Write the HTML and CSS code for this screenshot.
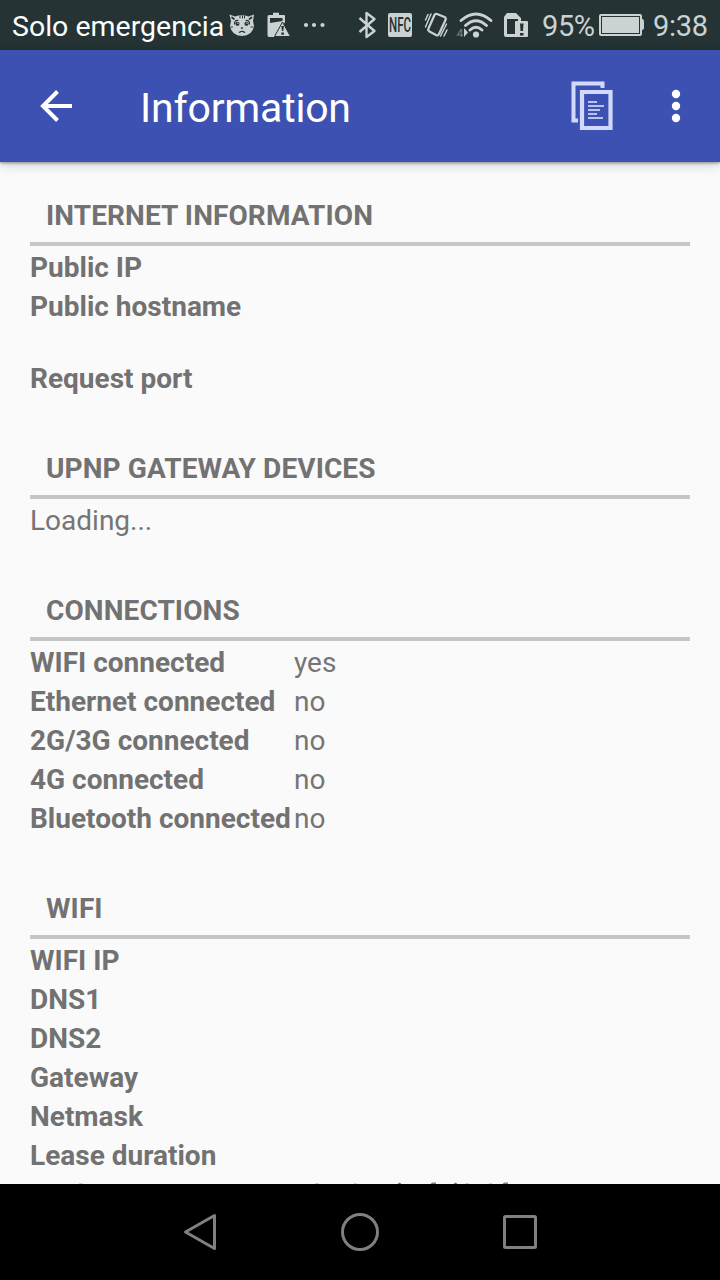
FILE: index.html
```html
<!DOCTYPE html>
<html lang="en">
<head>
<meta charset="utf-8">
<title>Information</title>
<link rel="stylesheet" href="styles.css">
</head>
<body>
<div class="screen">
  <div class="status">
    <span class="carrier">Solo emergencia</span>
    <svg class="status-icons" width="304" height="50" viewBox="226 0 304 50">
      <g fill="#cbd2d2">
        <path d="M229.500 14.500L235 16.500Q242 14 248.500 16.500L254 14.500L253 21L254 26Q252.500 35.500 242 36Q231.500 35.500 230 26L231 21Z"/>
        <path d="M271 15H273V12.800H279V15H284Q285 15 285 16V22L276 37H269Q267.500 37 267.500 35V17Q267.500 15 269 15Z"/>
        <circle cx="306" cy="25" r="2.100"/><circle cx="314" cy="25" r="2.100"/><circle cx="322.500" cy="25" r="2.100"/>
        <rect x="388" y="13" width="24" height="24" rx="2"/>
        <circle cx="476" cy="34.500" r="3.100"/>
        <path d="M464 28L468 32.500L464 37Z"/>
        <path d="M507 13H516L521 18V21H518V19H507V34H516V37H506Q504 37 504 35V17Z"/>
        <rect x="515" y="21" width="13" height="16" rx="1"/>
      </g>
      <g fill="none" stroke="#253335" stroke-linecap="round">
        <path d="M232 17.500L234 19M251.500 17.500L249.500 19" stroke-width="1.700"/>
        <path d="M240 16V18M242.500 16V18M244.500 16V18M231 27H232.500M252.500 27H251" stroke-width="1"/>
        <path d="M234.500 24Q234.500 20 238 20.500M249.500 24Q249.500 20 246 20.500" stroke-width="1.200"/>
        <path d="M239.500 32.300Q242 30.500 244.500 32.300M241.500 28H242.500" stroke-width="1.400"/>
      </g>
      <circle cx="237.500" cy="23.800" r="2.100" fill="#253335"/><circle cx="246.500" cy="23.800" r="2.100" fill="#253335"/>
      <circle cx="238" cy="23.200" r=".7" fill="#cbd2d2"/><circle cx="247" cy="23.200" r=".7" fill="#cbd2d2"/>
      <path d="M270 18H282.500V21L270 23Z" fill="#253335"/>
      <path d="M282.500 22L290.500 36.500H274.500Z" fill="#cbd2d2" stroke="#253335" stroke-width="1"/>
      <path d="M281.300 26H283.900L283.300 31H282ZM281.300 32.500H283.900V34.700H281.300Z" fill="#253335"/>
      <path d="M359.500 18L374.500 31L366.500 37V13L374.500 19L359.500 32" fill="none" stroke="#cbd2d2" stroke-width="2.400" stroke-linejoin="round"/>
      <text x="389" y="32" class="nfc" textLength="22" lengthAdjust="spacingAndGlyphs">NFC</text>
      <g fill="none" stroke="#cbd2d2" stroke-linecap="round">
        <path d="M437 14L444.500 17Q446.500 18 445.500 20L439 34Q438 36 436 35L429.500 31.500Q427.500 30.500 428.500 28.500L434.500 15Q435.300 13.300 437 14Z" stroke-width="2.200"/>
        <path d="M425.500 20L428 14.500M425.500 27L431 14M440.500 36L446.500 24M444 36L447 30" stroke-width="1.500"/>
        <path d="M461 20.500Q476 7.500 491 20.500M465.500 25.500Q476 16 486.500 25.500M470 30Q476 24.500 482 30" stroke-width="2.900"/>
      </g>
      <path d="M461.500 29L457.500 35H463M461.500 29V37" fill="none" stroke="#66716f" stroke-width="1.400"/>
      <path d="M520 23.500H523.500L523 31H520.500ZM520 33H523.500V35.500H520Z" fill="#253335"/>
    </svg>
    <span class="percent">95%</span>
    <svg class="battery" width="48" height="50" viewBox="597 0 48 50">
      <path d="M599 16Q599 14 601 14H640Q642 14 642 16V19H643Q644 20 644 22V28Q644 30 642 30V34Q642 36 640 36H601Q599 36 599 34Z" fill="#cbd2d2"/>
      <rect x="601.500" y="16.500" width="38" height="17" fill="none" stroke="#253335"/>
    </svg>
    <span class="clock">9:38</span>
  </div>

  <header class="toolbar">
    <svg class="back" width="40" height="40" viewBox="36 86 40 40"><path d="M57.500 91.500L43 106L57.500 120.500M42 106H72" fill="none" stroke="#fff" stroke-width="4"/></svg>
    <h1 class="title">Information</h1>
    <svg class="copy" width="46" height="52" viewBox="569 80 46 52">
      <path d="M602.500 88V83.500H573.500V120.500H578" fill="none" stroke="#d3d9fb" stroke-width="4"/>
      <path d="M582 92H610.500V128H582Z" fill="none" stroke="#d3d9fb" stroke-width="4.200"/>
      <path d="M588 102H597M588 106H604M588 110H600M588 114H597M588 118H603" stroke="#b9c3f2" stroke-width="1.800"/>
    </svg>
    <svg class="more" width="10" height="36" viewBox="671 88 10 36" fill="#fff"><circle cx="676" cy="94" r="4.200"/><circle cx="676" cy="106" r="4.200"/><circle cx="676" cy="118" r="4.200"/></svg>
  </header>

  <main class="content">
    <section class="group">
      <h2 class="heading">INTERNET INFORMATION</h2>
      <div class="row"><b>Public IP</b></div>
      <div class="row row-tall"><b>Public hostname</b></div>
      <div class="row"><b>Request port</b></div>
    </section>
    <section class="group">
      <h2 class="heading">UPNP GATEWAY DEVICES</h2>
      <div class="row"><span class="value">Loading...</span></div>
    </section>
    <section class="group">
      <h2 class="heading">CONNECTIONS</h2>
      <div class="row"><b>WIFI connected</b><span class="value">yes</span></div>
      <div class="row"><b>Ethernet connected</b><span class="value">no</span></div>
      <div class="row"><b>2G/3G connected</b><span class="value">no</span></div>
      <div class="row"><b>4G connected</b><span class="value">no</span></div>
      <div class="row"><b>Bluetooth connected</b><span class="value">no</span></div>
    </section>
    <section class="group">
      <h2 class="heading">WIFI</h2>
      <div class="row"><b>WIFI IP</b></div>
      <div class="row"><b>DNS1</b></div>
      <div class="row"><b>DNS2</b></div>
      <div class="row"><b>Gateway</b></div>
      <div class="row"><b>Netmask</b></div>
      <div class="row"><b>Lease duration</b></div>
      <svg class="cut-row" width="660" height="9" viewBox="30 1175 660 9">
        <path d="M79 1183.500H83M315 1183.500H319M354 1183.500H357M465 1183.500H469M489 1183.500H492" stroke="#d2d2d2"/>
        <path d="M398 1183.500H401M431 1183.500H436M454 1183.500H457M503 1183.500H508" stroke="#808080"/>
        <path d="M399 1182.500H400M432 1182.500H436M455 1182.500H456M504 1182.500H508" stroke="#c0c0c0"/>
      </svg>
    </section>
  </main>

  <nav class="navbar">
    <svg width="36" height="40" viewBox="182 1212 36 40"><path d="M214.500 1215.500V1248.500L185.500 1232Z"/></svg>
    <svg width="40" height="40" viewBox="340 1212 40 40"><circle cx="360" cy="1232" r="17.500"/></svg>
    <svg width="36" height="40" viewBox="502 1212 36 40"><rect x="504.500" y="1216.500" width="31" height="31" rx="1"/></svg>
  </nav>
</div>
</body>
</html>
```
FILE: styles.css
```css
* { box-sizing: border-box; }
body { margin: 0; font-family: Roboto, "Liberation Sans", sans-serif; }
svg { display: block; flex: none; }
.screen { width: 720px; height: 1280px; display: flex; flex-direction: column; background: #fafafa; overflow: hidden; }
.status { height: 50px; flex: none; display: flex; background: #253335; color: #cbd2d2; font-size: 29px; line-height: 53px; white-space: nowrap; }
.carrier { width: 214px; margin-left: 12px; color: #fafffe; font-size: 28.500px; }
.percent { width: 55px; margin-left: 12px; letter-spacing: -.4px; }
.clock { margin-left: 8px; letter-spacing: -.3px; }
.nfc { font-size: 20px; font-weight: 500; fill: #253335; letter-spacing: 0; }
.toolbar { height: 112px; flex: none; display: flex; align-items: center; background: #3d51b3; box-shadow: 0 1px 3px rgba(0,0,0,.4), 0 3px 12px rgba(0,0,0,.16); z-index: 1; }
.back { margin-left: 36px; }
.title { margin: 3px 0 0 64px; width: 429px; color: #fff; font-size: 41px; font-weight: 400; letter-spacing: -.2px; }
.more { margin-left: 56px; }
.content { flex: 1; min-height: 0; padding: 34px 30px 0; overflow: hidden; color: #727272; font-size: 28px; line-height: 39px; white-space: nowrap; }
.group { margin-bottom: 51px; }
.heading { margin: 0 0 2px; height: 50px; padding-left: 16px; border-bottom: 4px solid #c6c6c6; font-size: 28px; font-weight: 700; letter-spacing: .1px; }
.row { height: 39px; display: flex; }
.row-tall { height: 72px; }
.row b { width: 264px; font-weight: 700; }
.value { color: #757575; }
.navbar { height: 96px; flex: none; display: flex; align-items: center; padding-left: 182px; background: #000; fill: none; stroke: #808080; stroke-width: 3px; stroke-linejoin: round; }
.navbar svg + svg { margin-left: 122px; }
```
